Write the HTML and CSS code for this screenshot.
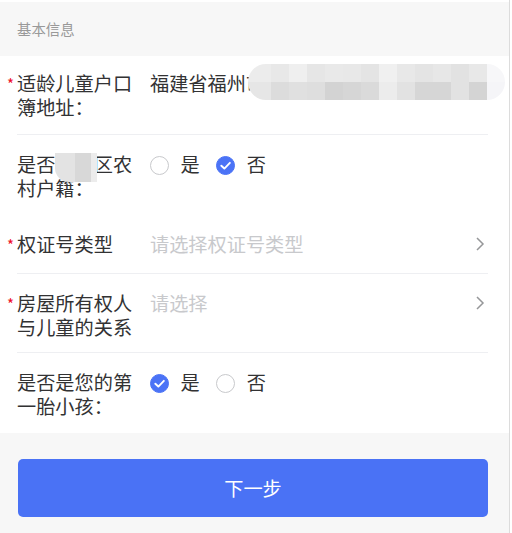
FILE: index.html
```html
<!DOCTYPE html>
<html lang="zh-CN">
<head>
<meta charset="utf-8">
<title>基本信息</title>
<link rel="stylesheet" href="styles.css">
</head>
<body>
<div class="page">
  <div class="section-title">基本信息</div>
  <div class="form">
    <div class="cell cell-first">
      <div class="label required">适龄儿童户口簿地址：</div>
      <div class="value value-text">
        <span>福建省福州市</span>
        <div class="mosaic">
          <div class="mcol cap-left"><i style="background:#ececec"></i><i style="background:#e6e6e6"></i></div>
          <div class="mcol"><i style="background:#e8e8e8"></i><i style="background:#dcdcdc"></i></div>
          <div class="mcol"><i style="background:#efefef"></i><i style="background:#e0e0e0"></i></div>
          <div class="mcol"><i style="background:#e6e6e6"></i><i style="background:#dedede"></i></div>
          <div class="mcol"><i style="background:#e9e9e9"></i><i style="background:#d3d3d3"></i></div>
          <div class="mcol"><i style="background:#e8e8e8"></i><i style="background:#d6d6d6"></i></div>
          <div class="mcol"><i style="background:#e4e4e4"></i><i style="background:#dadada"></i></div>
          <div class="mcol"><i style="background:#f0f0f0"></i><i style="background:#ececec"></i></div>
          <div class="mcol"><i style="background:#e8e8e8"></i><i style="background:#e2e2e2"></i></div>
          <div class="mcol"><i style="background:#e4e4e4"></i><i style="background:#d6d6d6"></i></div>
          <div class="mcol"><i style="background:#e7e7e7"></i><i style="background:#d6d6d6"></i></div>
          <div class="mcol"><i style="background:#e2e2e2"></i><i style="background:#e2e2e2"></i></div>
          <div class="mcol"><i style="background:#e8e8e8"></i><i style="background:#d4d4d4"></i></div>
          <div class="mcol cap-right"><i style="background:#f7f7f9"></i><i style="background:#f5f5f8"></i></div>
        </div>
      </div>
    </div>
    <div class="cell cell-noborder">
      <div class="label">是否<span class="blur"><span class="blur-inner"><i class="b1"></i><i class="b2"></i><i class="b3"></i></span></span>区农村户籍：</div>
      <div class="value">
        <div class="radio-group">
          <div class="radio"><span class="radio-icon"></span><span class="radio-label">是</span></div>
          <div class="radio"><span class="radio-icon checked"><svg viewBox="0 0 20 20"><path d="M5.6 10.2 L8.8 13.2 L14.6 7.2" fill="none" stroke="#fff" stroke-width="2" stroke-linecap="round" stroke-linejoin="round"/></svg></span><span class="radio-label">否</span></div>
        </div>
      </div>
    </div>
    <div class="cell cell-single">
      <div class="label required">权证号类型</div>
      <div class="value placeholder">请选择权证号类型</div>
      <svg class="arrow" viewBox="0 0 10 16"><path d="M2 2 L8 8 L2 14" fill="none" stroke="#969799" stroke-width="1.5"/></svg>
    </div>
    <div class="cell">
      <div class="label required">房屋所有权人与儿童的关系</div>
      <div class="value placeholder">请选择</div>
      <svg class="arrow" viewBox="0 0 10 16"><path d="M2 2 L8 8 L2 14" fill="none" stroke="#969799" stroke-width="1.5"/></svg>
    </div>
    <div class="cell cell-last">
      <div class="label">是否是您的第一胎小孩：</div>
      <div class="value">
        <div class="radio-group">
          <div class="radio"><span class="radio-icon checked"><svg viewBox="0 0 20 20"><path d="M5.6 10.2 L8.8 13.2 L14.6 7.2" fill="none" stroke="#fff" stroke-width="2" stroke-linecap="round" stroke-linejoin="round"/></svg></span><span class="radio-label">是</span></div>
          <div class="radio"><span class="radio-icon"></span><span class="radio-label">否</span></div>
        </div>
      </div>
    </div>
  </div>
  <div class="footer">
    <button class="btn-next" type="button">下一步</button>
  </div>
</div>
</body>
</html>
```

FILE: styles.css
```css
html, body {
  margin: 0;
  padding: 0;
  background: #ffffff;
}
body {
  font-family: "Noto Sans CJK SC", "Noto Sans", sans-serif;
  color: #323233;
}
.page {
  width: 510px;
  height: 533px;
  padding-top: 2px;
  box-sizing: border-box;
  border-right: 1px solid #dcdcdc;
  display: flex;
  flex-direction: column;
}
.section-title {
  height: 54px;
  background: #f7f7f7;
  color: #999999;
  font-size: 14.4px;
  line-height: 54px;
  padding-left: 17px;
}
.form {
  background: #ffffff;
}
.cell {
  position: relative;
  display: flex;
  align-items: flex-start;
  margin: 0 21px 0 17px;
  padding: 17px 0 13px;
  border-bottom: 1px solid #eeeff2;
  font-size: 19.2px;
  line-height: 24px;
}
.cell-first {
  padding: 15px 0 15px;
}
.cell-noborder {
  border-bottom: none;
}
.cell-single {
  padding: 19px 0 17px;
}
.cell-last {
  padding: 17px 0 15px;
  border-bottom: none;
}
.label {
  position: relative;
  width: 118px;
  flex: none;
  margin-right: 15px;
  color: #323233;
}
.label.required::before {
  content: "*";
  position: absolute;
  left: -10px;
  top: 1px;
  color: #ee0a24;
  font-size: 15px;
}
.value {
  flex: 1;
  position: relative;
  min-width: 0;
}
.value-text {
  white-space: nowrap;
}
.placeholder {
  color: #c8c9cc;
}
.arrow {
  width: 10px;
  height: 16px;
  flex: none;
  margin-top: 4px;
  margin-right: 3px;
}
.mosaic {
  position: absolute;
  left: 98px;
  top: -7px;
  display: flex;
  height: 36px;
}
.mcol {
  display: flex;
  flex-direction: column;
  width: 18px;
}
.mcol i {
  display: block;
  height: 18px;
}
.cap-left {
  width: 23px;
  border-radius: 18px 0 0 18px;
  overflow: hidden;
}
.cap-right {
  width: 18px;
  border-radius: 0 18px 18px 0;
  overflow: hidden;
}
.blur {
  display: inline-block;
  position: relative;
  width: 38.4px;
  height: 1px;
}
.blur-inner {
  position: absolute;
  left: 0;
  top: -18px;
  width: 42px;
  height: 29px;
  display: flex;
}
.blur-inner i {
  display: block;
  height: 100%;
}
.blur-inner .b1 {
  width: 20px;
  background: #e3e3e3;
  border-radius: 0 0 0 14px;
}
.blur-inner .b2 {
  width: 16px;
  background: #d8d8d8;
}
.blur-inner .b3 {
  width: 6px;
  background: #ececec;
}
.radio-group {
  display: flex;
  align-items: center;
  height: 24px;
}
.radio {
  display: flex;
  align-items: center;
  margin-right: 16.6px;
}
.radio-icon {
  width: 19px;
  height: 19px;
  box-sizing: border-box;
  border: 1px solid #c8c9cc;
  border-radius: 50%;
  display: flex;
  align-items: center;
  justify-content: center;
  margin-top: 2px;
}
.radio-icon.checked {
  border-color: #4b73f6;
  background: #4b73f6;
}
.radio-icon svg {
  width: 19px;
  height: 19px;
  flex: none;
}
.radio-label {
  margin-left: 11.5px;
  color: #323233;
}
.footer {
  flex: 1;
  background: #f7f7f7;
  padding: 26px 21px 0 18px;
}
.btn-next {
  display: block;
  width: 470px;
  height: 58px;
  border: none;
  border-radius: 5px;
  background: #4a72f5;
  color: #ffffff;
  font-family: "Noto Sans CJK SC", "Noto Sans", sans-serif;
  font-size: 19.2px;
  padding: 0;
}
```
